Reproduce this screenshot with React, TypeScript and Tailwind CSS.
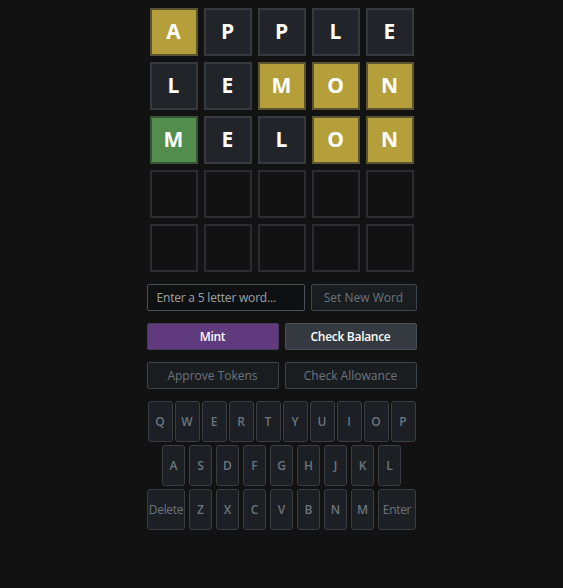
import React from 'react';

type Tile = { ch: string; s: 'y' | 'g' | 'd' | 'e' };

const board: Tile[][] = [
  [{ ch: 'A', s: 'y' }, { ch: 'P', s: 'd' }, { ch: 'P', s: 'd' }, { ch: 'L', s: 'd' }, { ch: 'E', s: 'd' }],
  [{ ch: 'L', s: 'd' }, { ch: 'E', s: 'd' }, { ch: 'M', s: 'y' }, { ch: 'O', s: 'y' }, { ch: 'N', s: 'y' }],
  [{ ch: 'M', s: 'g' }, { ch: 'E', s: 'd' }, { ch: 'L', s: 'd' }, { ch: 'O', s: 'y' }, { ch: 'N', s: 'y' }],
  [{ ch: '', s: 'e' }, { ch: '', s: 'e' }, { ch: '', s: 'e' }, { ch: '', s: 'e' }, { ch: '', s: 'e' }],
  [{ ch: '', s: 'e' }, { ch: '', s: 'e' }, { ch: '', s: 'e' }, { ch: '', s: 'e' }, { ch: '', s: 'e' }],
];

const tileCls = {
  y: 'bg-[#b59f3b] border-[#5a5530]',
  g: 'bg-[#538d4e] border-[#35553a]',
  d: 'bg-[#212529] border-[#36393d]',
  e: 'bg-[#121212] border-[#2a2c2f]',
};

const keyCls =
  'h-[41px] flex items-center justify-center rounded-[3px] border border-[#3a3e43] bg-[#1c1f23] text-[12px] text-[#6c757d]';

export default function App() {
  return (
    <div
      className="min-h-screen bg-[#121212] pt-[8px]"
      style={{ fontFamily: '"Open Sans", sans-serif' }}
    >
      <div className="mx-auto w-[270px] flex flex-col items-center">
        <div className="grid grid-cols-5 gap-[6px] w-[264px]">
          {board.flat().map((t, i) => (
            <div
              key={i}
              className={`h-[48px] w-[48px] flex items-center justify-center border-2 text-[21px] font-bold text-white ${tileCls[t.s]}`}
            >
              {t.ch}
            </div>
          ))}
        </div>

        <div className="mt-[12px] flex gap-[6px] w-full">
          <div className="w-[158px] h-[27px] flex items-center px-[9px] rounded-[2px] border border-[#495057] bg-[#0e1012] text-[12px] text-[#9ea3a8] tracking-[-0.2px]">
            Enter a 5 letter word...
          </div>
          <button className="flex-1 h-[27px] rounded-[2px] border border-[#3f444a] bg-[#1a1d20] text-[12px] text-[#6c757d]">
            Set New Word
          </button>
        </div>

        <div className="mt-[12px] grid grid-cols-2 gap-[6px] w-full">
          <button className="h-[27px] rounded-[2px] border border-[#4a3a5c] bg-[#5f3b7e] text-[12px] font-semibold text-white tracking-[-0.3px]">
            Mint
          </button>
          <button className="h-[27px] rounded-[2px] border border-[#4a4f55] bg-[#343a40] text-[12px] font-semibold text-white tracking-[-0.3px]">
            Check Balance
          </button>
        </div>

        <div className="mt-[12px] grid grid-cols-2 gap-[6px] w-full">
          <button className="h-[27px] rounded-[2px] border border-[#3f444a] bg-[#1a1d20] text-[12px] text-[#6c757d]">
            Approve Tokens
          </button>
          <button className="h-[27px] rounded-[2px] border border-[#3f444a] bg-[#1a1d20] text-[12px] text-[#6c757d]">
            Check Allowance
          </button>
        </div>

        <div className="mt-[12px] flex flex-col items-center gap-[3px]">
          <div className="flex gap-[2px]">
            {'QWERTYUIOP'.split('').map((k) => (
              <div key={k} className={`${keyCls} w-[25px] font-semibold`}>{k}</div>
            ))}
          </div>
          <div className="flex gap-[4px]">
            {'ASDFGHJKL'.split('').map((k) => (
              <div key={k} className={`${keyCls} w-[23px] font-semibold`}>{k}</div>
            ))}
          </div>
          <div className="flex gap-[4px]">
            <div className={`${keyCls} w-[38px] tracking-[-0.3px]`}>Delete</div>
            {'ZXCVBNM'.split('').map((k) => (
              <div key={k} className={`${keyCls} w-[23px] font-semibold`}>{k}</div>
            ))}
            <div className={`${keyCls} w-[38px] tracking-[-0.3px]`}>Enter</div>
          </div>
        </div>
      </div>
    </div>
  );
}
